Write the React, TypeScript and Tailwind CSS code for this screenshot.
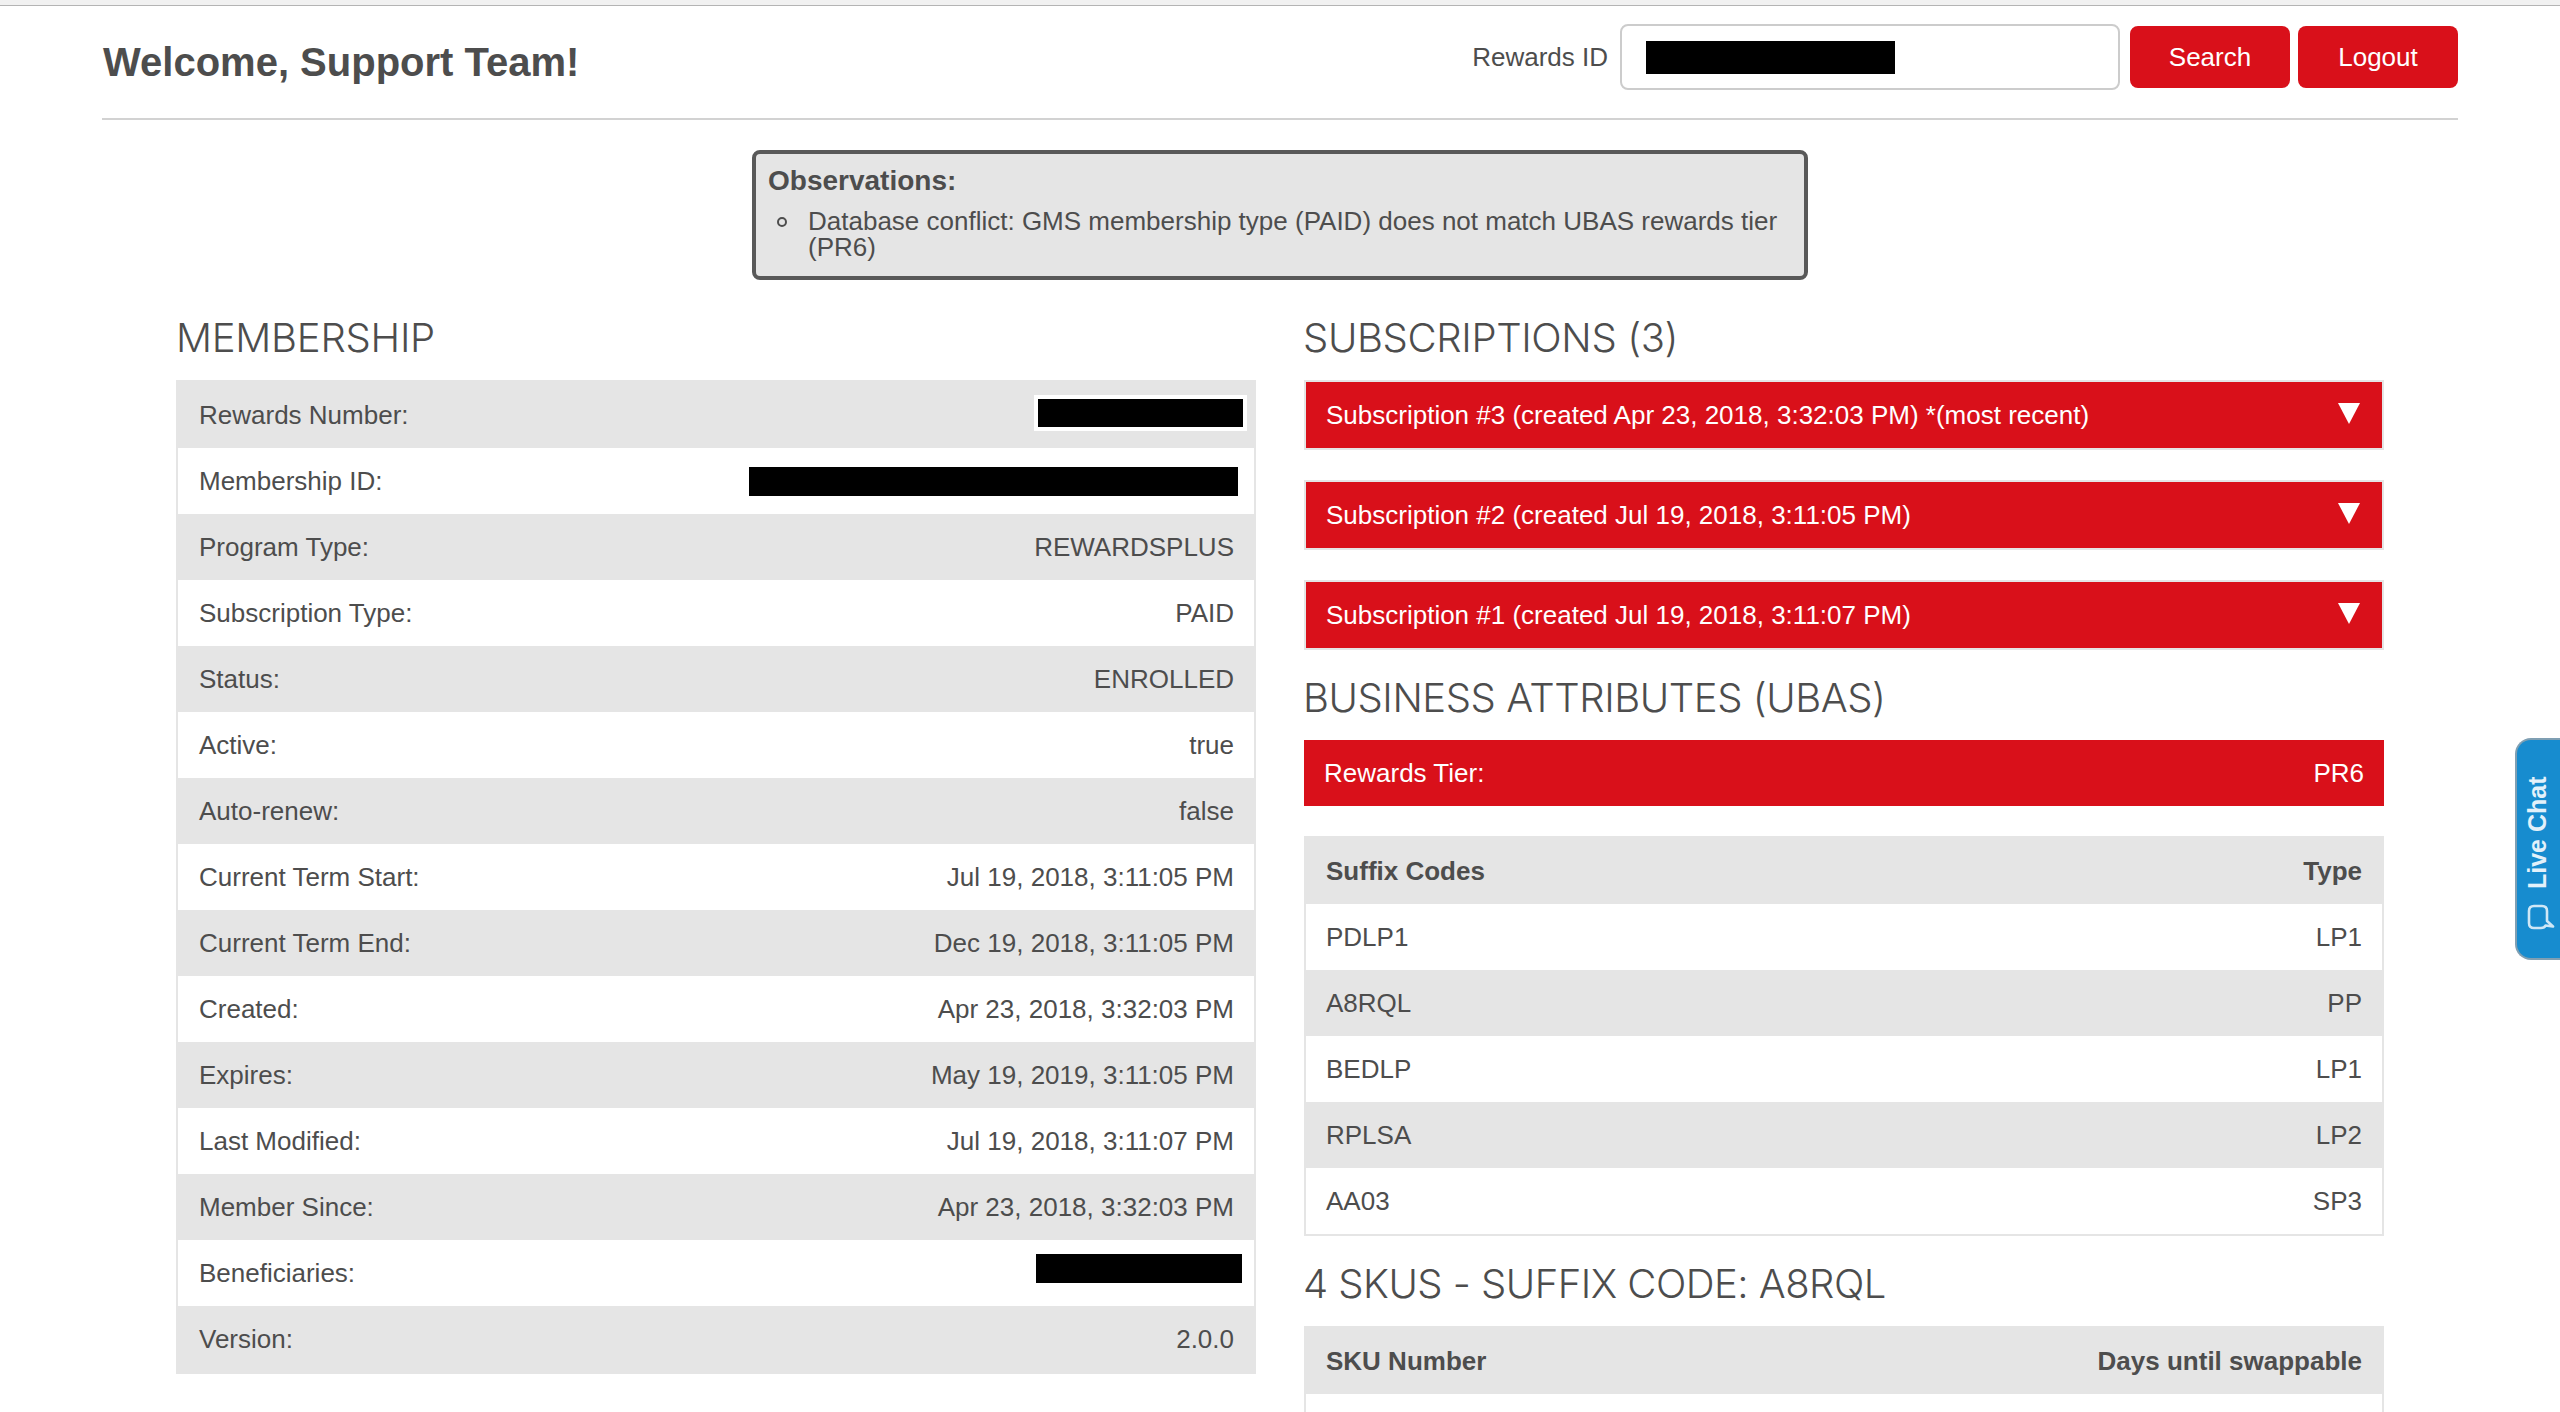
import type { ReactNode } from 'react';

type Row = [string, ReactNode];

const membership: Row[] = [
  [
    'Rewards Number:',
    <span className="-mr-[13px] -mt-[4px] block h-[36px] w-[213px] border-[4px] border-white bg-black" />,
  ],
  ['Membership ID:', <span className="-mr-[4px] block h-[29px] w-[489px] bg-black" />],
  ['Program Type:', 'REWARDSPLUS'],
  ['Subscription Type:', 'PAID'],
  ['Status:', 'ENROLLED'],
  ['Active:', 'true'],
  ['Auto-renew:', 'false'],
  ['Current Term Start:', 'Jul 19, 2018, 3:11:05 PM'],
  ['Current Term End:', 'Dec 19, 2018, 3:11:05 PM'],
  ['Created:', 'Apr 23, 2018, 3:32:03 PM'],
  ['Expires:', 'May 19, 2019, 3:11:05 PM'],
  ['Last Modified:', 'Jul 19, 2018, 3:11:07 PM'],
  ['Member Since:', 'Apr 23, 2018, 3:32:03 PM'],
  ['Beneficiaries:', <span className="-mr-[8px] -mt-[9px] block h-[29px] w-[206px] bg-black" />],
  ['Version:', '2.0.0'],
];

const subscriptions = [
  'Subscription #3 (created Apr 23, 2018, 3:32:03 PM) *(most recent)',
  'Subscription #2 (created Jul 19, 2018, 3:11:05 PM)',
  'Subscription #1 (created Jul 19, 2018, 3:11:07 PM)',
];

const suffixCodes: Row[] = [
  ['Suffix Codes', 'Type'],
  ['PDLP1', 'LP1'],
  ['A8RQL', 'PP'],
  ['BEDLP', 'LP1'],
  ['RPLSA', 'LP2'],
  ['AA03', 'SP3'],
];

const skus: Row[] = [
  ['SKU Number', 'Days until swappable'],
  ['', ''],
];

function Heading({ children, className }: { children: ReactNode; className: string }) {
  return (
    <h2 className={`flex h-[90px] items-end whitespace-nowrap pb-[18px] font-[Inter,sans-serif] text-[40px] leading-[48px] font-light ${className}`}>
      {children}
    </h2>
  );
}

function Table({ rows, header = false, className = 'pl-5' }: { rows: Row[]; header?: boolean; className?: string }) {
  return (
    <div className="border-2 border-[#e5e5e5]">
      {rows.map(([label, value], i) => (
        <div
          key={i}
          className={`flex h-[66px] items-center justify-between pr-5 odd:bg-[#e5e5e5] ${className} ${header && i === 0 ? 'font-bold' : ''}`}
        >
          <span>{label}</span>
          <span>{value}</span>
        </div>
      ))}
    </div>
  );
}

export default function App() {
  return (
    <div className="relative h-[1412px] w-[2560px] overflow-hidden bg-white font-['Liberation_Sans',Arial,sans-serif] text-[26px] leading-[30px] text-[#4d4d4d]">
      <div className="h-[6px] border-b border-[#b4b4b4] bg-[#f1f1f1]" />

      <header className="mx-[102px] flex h-[114px] justify-between border-b-2 border-[#d2d2d2]">
        <h1 className="mt-[33px] ml-px text-[40px] leading-[46px] font-bold">Welcome, Support Team!</h1>
        <div className="mt-[18px] flex h-[66px] items-center">
          <label className="mr-[12px]">Rewards ID</label>
          <div className="mr-[10px] flex h-[66px] w-[500px] items-center rounded-[8px] border-2 border-[#ccc] pl-[24px]">
            <span className="block h-[33px] w-[249px] bg-black" />
          </div>
          <button className="mr-[8px] h-[62px] w-[160px] rounded-[8px] bg-[#d9101a] text-white">Search</button>
          <button className="h-[62px] w-[160px] rounded-[8px] bg-[#d9101a] text-white">Logout</button>
        </div>
      </header>

      <section className="mx-auto mt-[30px] h-[130px] w-[1056px] rounded-[8px] border-4 border-[#595959] bg-[#e5e5e5] pt-[11px] pl-[12px]">
        <h3 className="text-[28px] leading-[32px] font-bold">Observations:</h3>
        <ul className="mt-[11px]">
          <li className="flex leading-[26px]">
            <span className="mt-[9px] mr-[21px] ml-[9px] size-[10px] shrink-0 rounded-full border-2 border-[#4d4d4d]" />
            <span className="whitespace-nowrap">
              Database conflict: GMS membership type (PAID) does not match UBAS rewards tier
              <br />
              (PR6)
            </span>
          </li>
        </ul>
      </section>

      <main className="mt-[10px] ml-[176px] grid grid-cols-[1080px_1080px] items-start gap-[48px]">
        <section>
          <Heading className="tracking-[-0.25px]">MEMBERSHIP</Heading>
          <Table rows={membership} className="pl-[21px]" />
        </section>

        <section>
          <Heading className="-ml-px tracking-[-0.36px]">SUBSCRIPTIONS (3)</Heading>
          <div className="flex flex-col gap-[30px]">
            {subscriptions.map((title) => (
              <div
                key={title}
                className="flex h-[70px] items-center justify-between border-2 border-[#e5e5e5] bg-[#d9101a] pr-[22px] pl-5 text-white"
              >
                <span>{title}</span>
                <svg className="-mt-[3px] h-[21px] w-[22px]" viewBox="0 0 22 21" fill="currentColor">
                  <path d="M0 0h22L11 21z" />
                </svg>
              </div>
            ))}
          </div>

          <Heading className="-ml-px tracking-[-0.44px]">BUSINESS ATTRIBUTES (UBAS)</Heading>
          <div className="mb-[30px] flex h-[66px] items-center justify-between bg-[#d9101a] px-5 text-white">
            <span>Rewards Tier:</span>
            <span>PR6</span>
          </div>
          <Table rows={suffixCodes} header />

          <Heading className="-ml-px tracking-[-0.53px]">4 SKUS - SUFFIX CODE: A8RQL</Heading>
          <Table rows={skus} header />
        </section>
      </main>

      <button className="absolute top-[738px] right-0 flex h-[222px] w-[45px] flex-col items-center rounded-l-[16px] border-2 border-r-0 border-[#7f9fb3] bg-[#178ccf] pt-[36px] text-white">
        <span className="mr-[3px] h-[113px] rotate-180 text-[25px] leading-[30px] font-bold whitespace-nowrap text-[#e3f1fa] [writing-mode:vertical-rl]">
          Live Chat
        </span>
        <svg className="mt-[15px] ml-[5px] h-[26px] w-[28px] shrink-0" viewBox="0 0 28 26" fill="none" stroke="#cfe7f6" strokeWidth="2.6" strokeLinejoin="round">
          <path d="M7 2H15Q20 2 20 7V17L26 22.5L18.5 21.5Q17.500 24 14 24H7Q2 24 2 19V7Q2 2 7 2Z" />
        </svg>
      </button>
    </div>
  );
}
